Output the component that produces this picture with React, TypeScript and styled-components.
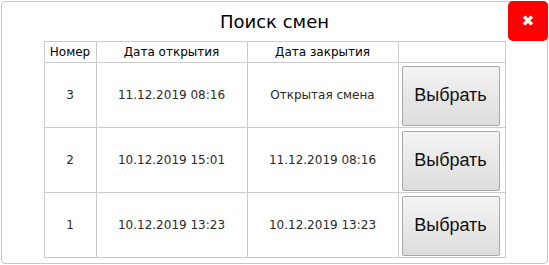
import styled, { createGlobalStyle } from "styled-components";

const GlobalStyle = createGlobalStyle`
    html, body {
        margin: 0;
        padding: 0;
        background: #ffffff;
        font-family: "DejaVu Sans", Verdana, sans-serif;
    }
`;

const Dialog = styled.div`
    width: 547px;
    height: 263px;
    margin: 1px;
    box-sizing: border-box;
    position: relative;

    display: flex;
    flex-direction: column;
    align-items: center;

    border: 1px solid #c9c9c9;
    border-radius: 4px;
    background: #ffffff;
`;

const Title = styled.h1`
    height: 38px;
    flex: none;
    margin: 0 0 1px;
    display: flex;
    align-items: center;

    font-size: 18px;
    font-weight: normal;
    color: #000000;
`;

const CloseButton = styled.button`
    width: 40px;
    height: 40px;
    position: absolute;
    top: -1px;
    right: -1px;
    padding: 0;

    border: none;
    border-radius: 5px;
    background: #ff0000;
    color: #ffffff;

    font-family: "DejaVu Sans", sans-serif;
    font-size: 15px;
    font-weight: bold;
    line-height: 1;
    cursor: pointer;
`;

const Table = styled.table`
    flex: none;
    border-collapse: collapse;
    table-layout: fixed;
    width: 457px;
`;

const HeadRow = styled.tr`
    height: 21px;
`;

const Row = styled.tr`
    height: 65px;
`;

const HeadCell = styled.th<{ $width: number }>`
    width: ${props => props.$width}px;
    padding: 0;

    border: 1px solid #cccccc;
    font-size: 12px;
    font-weight: normal;
    color: #000000;
    text-align: center;
    white-space: nowrap;
`;

const Cell = styled.td`
    padding: 0;
    border: 1px solid #cccccc;

    font-size: 12px;
    color: #2a2a2a;
    text-align: center;
    white-space: nowrap;
`;

const ActionCell = styled(Cell)`
    padding: 2px 3px 1px 3px;
`;

const PickButton = styled.button`
    width: 98px;
    height: 60px;
    display: block;
    padding: 0;

    border: 1px solid #a9a9a9;
    border-radius: 2px;
    background: linear-gradient(#f4f4f4, #dcdcdc);

    font-family: "Liberation Sans", Arial, sans-serif;
    font-size: 18px;
    color: #111111;
    cursor: pointer;
`;

const shifts = [
    { id: 3, opened: "11.12.2019 08:16", closed: "Открытая смена" },
    { id: 2, opened: "10.12.2019 15:01", closed: "11.12.2019 08:16" },
    { id: 1, opened: "10.12.2019 13:23", closed: "10.12.2019 13:23" },
];

const App = () => {
    return (
        <>
            <GlobalStyle />
            <Dialog>
                <Title>Поиск смен</Title>
                <CloseButton>✖</CloseButton>
                <Table>
                    <thead>
                        <HeadRow>
                            <HeadCell $width={51}>Номер</HeadCell>
                            <HeadCell $width={150}>Дата открытия</HeadCell>
                            <HeadCell $width={150}>Дата закрытия</HeadCell>
                            <HeadCell $width={106}></HeadCell>
                        </HeadRow>
                    </thead>
                    <tbody>
                        {shifts.map(shift => (
                            <Row key={shift.id}>
                                <Cell>{shift.id}</Cell>
                                <Cell>{shift.opened}</Cell>
                                <Cell>{shift.closed}</Cell>
                                <ActionCell>
                                    <PickButton>Выбрать</PickButton>
                                </ActionCell>
                            </Row>
                        ))}
                    </tbody>
                </Table>
            </Dialog>
        </>
    );
}

export default App;
